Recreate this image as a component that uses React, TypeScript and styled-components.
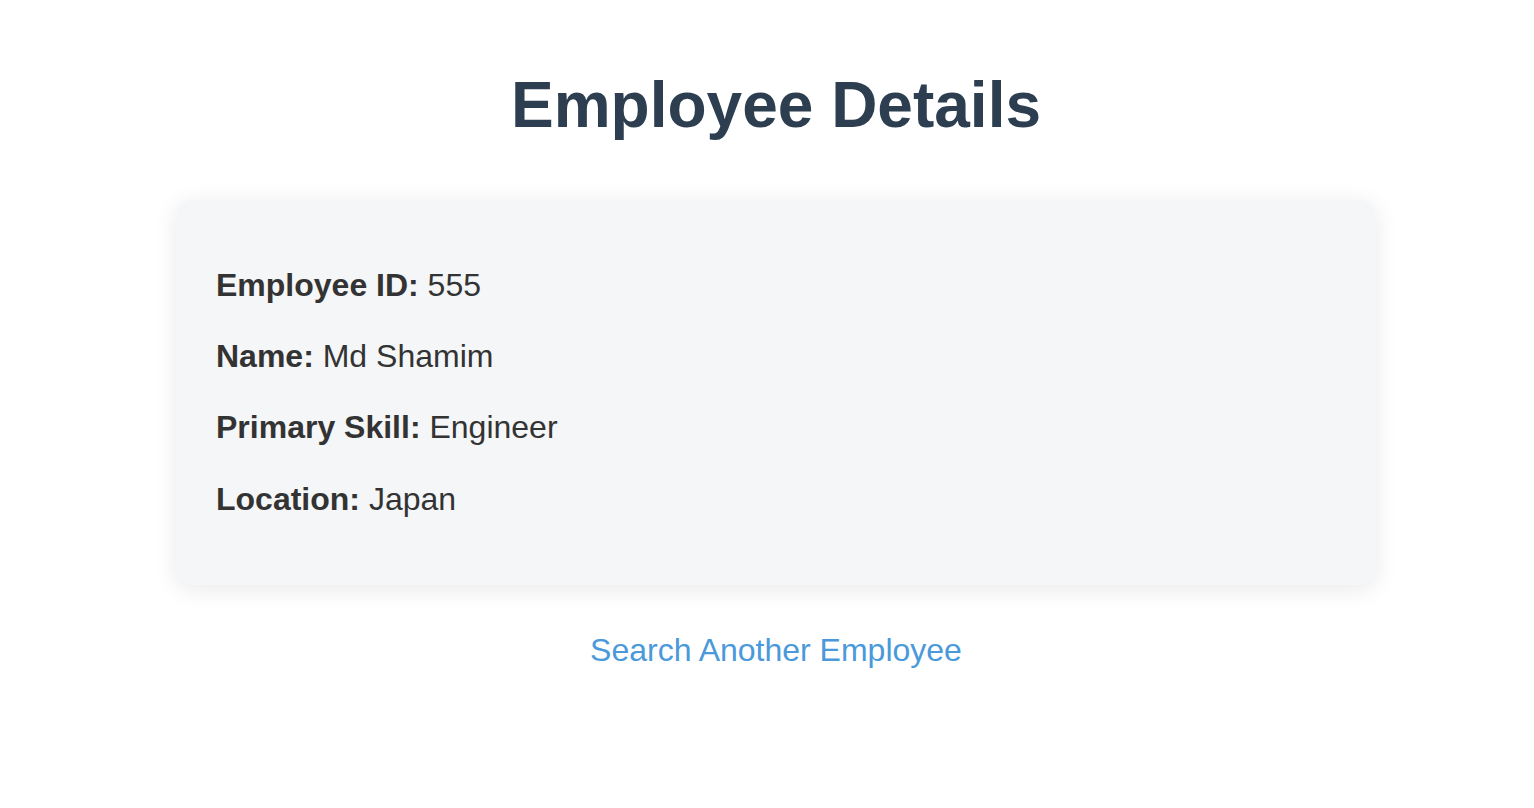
import * as React from "react"
import styled, { createGlobalStyle } from "styled-components"

const GlobalStyle = createGlobalStyle`
  html, body {
    margin: 0;
    padding: 0;
    background: #ffffff;
  }
  body {
    font-family: "Liberation Sans", Arial, Helvetica, sans-serif;
    color: #333333;
  }
`

const Page = styled.div`
  padding: 68px 0 40px 18px;
`

const Container = styled.div`
  max-width: 1200px;
  margin: 0 auto;
  display: flex;
  flex-direction: column;
  align-items: stretch;
`

const Title = styled.h1`
  margin: 0 0 58px;
  text-align: center;
  font-size: 64px;
  font-weight: 700;
  color: #2c3e50;
`

const Card = styled.div`
  background: #f5f6f8;
  border-radius: 16px;
  padding: 40px;
  box-shadow: 0 4px 24px rgba(0, 0, 0, 0.09);
`

const Row = styled.p`
  margin: 20px 0;
  font-size: 32px;
  line-height: 1.6;
  color: #333333;

  strong {
    font-weight: 700;
  }
`

const LinkWrap = styled.div`
  margin-top: 47px;
  text-align: center;
`

const SearchLink = styled.a`
  font-size: 32px;
  color: #4a99db;
  text-decoration: none;
  cursor: pointer;
`

const details = [
  { label: "Employee ID:", value: "555" },
  { label: "Name:", value: "Md Shamim" },
  { label: "Primary Skill:", value: "Engineer" },
  { label: "Location:", value: "Japan" },
]

export default function App() {
  return (
    <>
      <GlobalStyle />
      <Page>
        <Container>
          <Title>Employee Details</Title>
          <Card>
            {details.map((d) => (
              <Row key={d.label}>
                <strong>{d.label}</strong> {d.value}
              </Row>
            ))}
          </Card>
          <LinkWrap>
            <SearchLink href="#">Search Another Employee</SearchLink>
          </LinkWrap>
        </Container>
      </Page>
    </>
  )
}
